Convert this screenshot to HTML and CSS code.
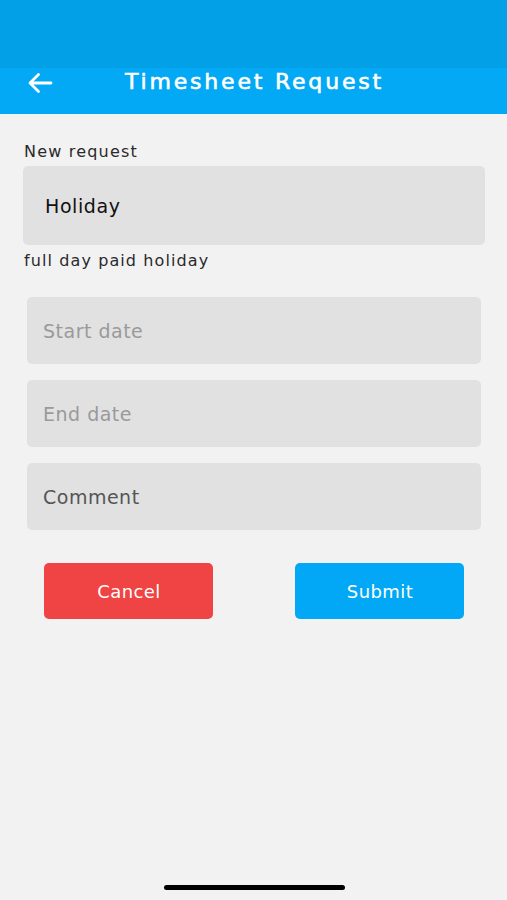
FILE: index.html
```html
<!DOCTYPE html>
<html lang="en">
<head>
  <meta charset="UTF-8" />
  <title>Timesheet Request</title>
  <link rel="stylesheet" href="styles.css">
</head>
<body>

  <!-- top bar -->
  <div class="header">
    <svg class="back" width="26" height="22" viewBox="0 0 26 22">
      <path d="M24 11H3M11.5 2.5L3 11l8.5 8.5" fill="none" stroke="#fff" stroke-width="2.8" stroke-linecap="round" stroke-linejoin="round"/>
    </svg>
    <h1>Timesheet Request</h1>
  </div>

  <div class="content">
    <div class="label">New request</div>
    <div class="select">Holiday</div>
    <div class="hint">full day paid holiday</div>

    <div class="fields">
      <div class="field placeholder">Start date</div>
      <div class="field placeholder">End date</div>
      <div class="field comment">Comment</div>
    </div>

    <div class="actions">
      <button class="btn cancel">Cancel</button>
      <button class="btn submit">Submit</button>
    </div>
  </div>

  <div class="home"></div>

</body>
</html>
```

FILE: styles.css
```css
body {
  margin: 0;
  height: 900px;
  font-family: "DejaVu Sans", "Open Sans", Arial, sans-serif;
  background: #f2f2f2;
  color: #222;
  position: relative;
  overflow: hidden;
}

.header {
  height: 114px;
  box-sizing: border-box;
  padding: 67px 0 0 27px;
  background: linear-gradient(#02a0e6 0, #02a0e6 68px, #03a9f4 68px);
  display: flex;
  align-items: flex-start;
}

.back {
  margin-top: 5px;
}

.header h1 {
  margin: 0 0 0 72px;
  font-size: 22px;
  line-height: 30px;
  font-weight: 400;
  letter-spacing: 2.8px;
  -webkit-text-stroke: 0.6px #fff;
  color: #fff;
}

.content {
  padding: 28px 22px 0 24px;
}

.label, .hint {
  font-size: 16px;
  line-height: 20px;
  color: #2a2a2a;
  letter-spacing: 1.2px;
}

.hint {
  margin-top: 6px;
  letter-spacing: 1.1px;
}

.select {
  margin: 4px 0 0 -1px;
  height: 79px;
  background: #e1e1e1;
  border-radius: 5px;
  display: flex;
  align-items: center;
  padding-left: 22px;
  font-size: 19px;
  color: #111;
  letter-spacing: 0.6px;
}

.fields {
  margin: 26px 4px 0 3px;
  display: flex;
  flex-direction: column;
  gap: 16px;
}

.field {
  height: 67px;
  background: #e1e1e1;
  border-radius: 5px;
  display: flex;
  align-items: center;
  padding-left: 16px;
  font-size: 19px;
  letter-spacing: 0.5px;
}

.placeholder { color: #9a9a9a; }
.comment { color: #555; }

.actions {
  margin: 33px 21px 0 20px;
  display: flex;
  justify-content: space-between;
}

.btn {
  width: 169px;
  height: 56px;
  border: none;
  border-radius: 5px;
  color: #fff;
  font-family: inherit;
  font-size: 18px;
  letter-spacing: 0.4px;
  padding: 0 0 0 1px;
}

.cancel { background: #f04343; }
.submit { background: #02a8f5; }

.home {
  position: absolute;
  left: 164px;
  top: 885px;
  width: 181px;
  height: 5px;
  border-radius: 3px;
  background: #000;
}
```
